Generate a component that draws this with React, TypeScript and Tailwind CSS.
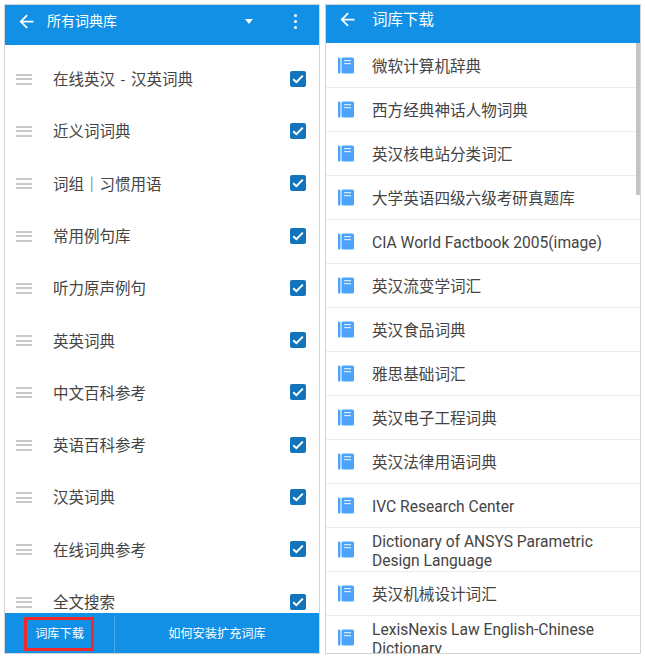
import React from 'react';

const leftItems = [
  '在线英汉 - 汉英词典',
  '近义词词典',
  '词组｜习惯用语',
  '常用例句库',
  '听力原声例句',
  '英英词典',
  '中文百科参考',
  '英语百科参考',
  '汉英词典',
  '在线词典参考',
  '全文搜索',
];

const rightItems = [
  '微软计算机辞典',
  '西方经典神话人物词典',
  '英汉核电站分类词汇',
  '大学英语四级六级考研真题库',
  'CIA World Factbook 2005(image)',
  '英汉流变学词汇',
  '英汉食品词典',
  '雅思基础词汇',
  '英汉电子工程词典',
  '英汉法律用语词典',
  'IVC Research Center',
  'Dictionary of ANSYS Parametric Design Language',
  '英汉机械设计词汇',
  'LexisNexis Law English-Chinese Dictionary',
];

const BackArrow = () => (
  <svg width="21" height="21" viewBox="0 0 24 24" fill="white" className="shrink-0">
    <path d="M20 11H7.83l5.59-5.59L12 4l-8 8 8 8 1.41-1.41L7.83 13H20v-2z" />
  </svg>
);

const BookIcon = () => (
  <svg width="16" height="17" viewBox="0 0 16 17" className="shrink-0">
    <rect x="0" y="0.5" width="2.5" height="16" rx="1" fill="#4da3fb" />
    <rect x="3.5" y="0.5" width="12.5" height="16" rx="1.5" fill="#4da3fb" />
    <rect x="6" y="3" width="7" height="1.2" fill="#d5e9fd" />
    <rect x="6" y="6" width="7" height="1.2" fill="#d5e9fd" />
  </svg>
);

const CheckBox = () => (
  <span className="-mt-[1px] flex h-4 w-4 items-center justify-center rounded-[2px] bg-[#1275bc]">
    <svg width="12" height="10" viewBox="0 0 12 10" fill="none">
      <path d="M1.2 5.2 L4.4 8.2 L10.8 1.6" stroke="white" strokeWidth="2" />
    </svg>
  </span>
);

export default function App() {
  return (
    <div
      className="flex h-[657px] w-[645px] gap-[5px] bg-white pt-1 pl-1 pb-[3px] pr-1 text-[#444444]"
      style={{ fontFamily: 'Roboto, "Noto Sans CJK SC", sans-serif' }}
    >
      {/* all dictionaries */}
      <div className="relative flex w-[316px] flex-col overflow-hidden border border-[#d4d4d4]">
        <div className="flex h-[40px] shrink-0 items-center bg-[#1190e6] pb-[8px] pl-[11px] pr-[22px] text-white">
          <BackArrow />
          <span className="ml-[10px] flex-1 text-[14px]">所有词典库</span>
          <span className="mr-[41px] h-0 w-0 border-x-[4px] border-t-[5px] border-x-transparent border-t-white" />
          <span className="flex flex-col gap-[3px]">
            <span className="h-[3px] w-[3px] rounded-full bg-white" />
            <span className="h-[3px] w-[3px] rounded-full bg-white" />
            <span className="h-[3px] w-[3px] rounded-full bg-white" />
          </span>
        </div>
        <div className="flex-1 overflow-hidden pt-2">
          {leftItems.map((item) => (
            <div key={item} className="flex h-[52.3px] items-center pl-[11px] pr-[13px]">
              <span className="flex w-[16px] flex-col gap-[2.5px]">
                <span className="h-[2px] bg-[#c9c9c9]" />
                <span className="h-[2px] bg-[#c9c9c9]" />
                <span className="h-[2px] bg-[#c9c9c9]" />
              </span>
              <span className="ml-[21px] flex-1 pt-[3px] text-[15.5px] [word-spacing:2px]">{item}</span>
              <CheckBox />
            </div>
          ))}
        </div>
        <div className="flex h-[40px] shrink-0 items-center bg-[#1190e6] pt-[3px] text-[12.2px] text-white">
          <span className="flex h-full w-[110px] items-center justify-center border-r border-[#4aa9ea]">词库下载</span>
          <span className="flex-1 text-center">如何安装扩充词库</span>
        </div>
        <div className="absolute bottom-[2px] left-[19px] h-[34px] w-[70px] border-[3px] border-[#ee2a2a]" />
      </div>

      {/* dictionary download */}
      <div className="relative flex w-[316px] flex-col overflow-hidden border border-[#d4d4d4]">
        <div className="flex h-[38px] shrink-0 items-start bg-[#1190e6] pl-[11px] pt-[4px] text-white">
          <BackArrow />
          <span className="ml-[14px] pt-[1px] text-[15.5px] leading-[21px]">词库下载</span>
        </div>
        <div className="flex-1 overflow-hidden pt-[1px]">
          {rightItems.map((item) => (
            <div key={item} className="flex h-[44px] items-center border-b border-[#ececec] pl-[12px] pr-[20px]">
              <BookIcon />
              <span className="ml-[18px] pt-[4px] text-[15.6px] leading-[19px]">{item}</span>
            </div>
          ))}
        </div>
        <div className="absolute right-0 top-[38px] h-[152px] w-[4px] bg-[#c4c4c4]" />
      </div>
    </div>
  );
}
